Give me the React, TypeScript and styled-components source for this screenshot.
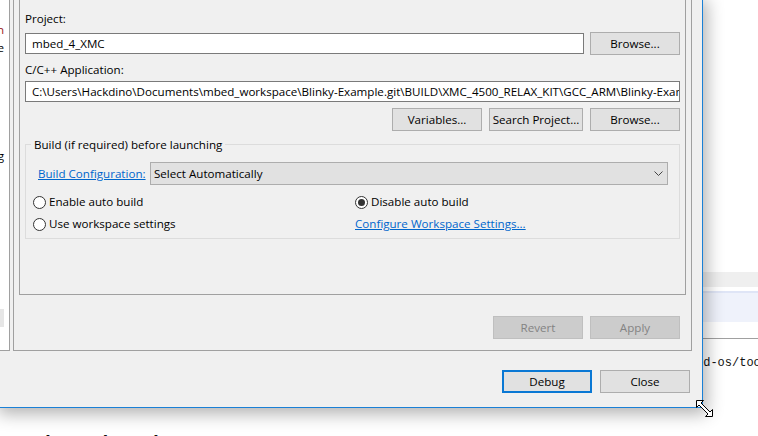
import React from "react";
import styled, { createGlobalStyle } from "styled-components";

const UI_FONT = `"Open Sans", "Noto Sans", "Liberation Sans", sans-serif`;
const MONO_FONT = `"Liberation Mono", "DejaVu Sans Mono", monospace`;

const GlobalStyle = createGlobalStyle`
  html, body { margin: 0; padding: 0; background: #ffffff; }
  body { font-family: ${UI_FONT}; font-size: 11.6px; color: #000; }
  * { box-sizing: border-box; }
`;

const Desktop = styled.div`
  position: relative;
  width: 758px;
  height: 436px;
  overflow: hidden;
  background: #ffffff;
`;

/* ---------- background IDE window ---------- */
const BackWindow = styled.div`
  display: flex;
  flex-direction: column;
  height: 100%;
  padding-top: 272px;
  & > * {
    flex: none;
  }
`;

const BackToolbar = styled.div`
  height: 15px;
  background: #efefef;
`;

const BackTabStrip = styled.div`
  margin-top: 4px;
  height: 31px;
  background: #eff2fb;
  border-top: 2px solid #dfe5f6;
`;

const BackRule = styled.div`
  margin-top: 16px;
  height: 1px;
  background: #a0a0a0;
`;

const ConsoleLine = styled.div<{ $mt: number; $indent: number }>`
  margin-top: ${(p) => p.$mt}px;
  padding-left: ${(p) => p.$indent}px;
  height: 16px;
  line-height: 16px;
  font-family: ${MONO_FONT};
  font-size: 12px;
  white-space: pre;
  color: #111;
`;

/* ---------- dialog window ---------- */
const Dialog = styled.div`
  position: absolute;
  top: 0;
  left: 0;
  width: 703px;
  height: 408px;
  background: #f0f0f0;
  border-right: 1px solid #1a80d6;
  border-bottom: 1px solid #1a80d6;
  box-shadow: 1px 3px 16px 3px rgba(0, 0, 0, 0.3);
  display: flex;
  flex-direction: column;
`;

const DialogBody = styled.div`
  display: flex;
  height: 351px;
  flex: none;
`;

const TreePane = styled.div`
  width: 10px;
  height: 100%;
  background: #ffffff;
  border-right: 1px solid #a0a0a0;
  border-bottom: 1px solid #a0a0a0;
  display: flex;
  flex-direction: column;
  padding-top: 21px;
  overflow: hidden;
`;

const TreeRow = styled.div<{ $color?: string }>`
  flex: none;
  height: 18px;
  line-height: 18px;
  display: flex;
  justify-content: flex-end;
  padding-right: 5px;
  white-space: nowrap;
  color: ${(p) => p.$color ?? "#000"};
`;

const TreeSelection = styled.span`
  background: #e6e6e6;
  padding-right: 7px;
  color: transparent;
`;

const TreeGap = styled.div<{ $rows: number }>`
  flex: none;
  height: ${(p) => p.$rows * 18}px;
`;

const ConfigPanel = styled.div`
  margin-left: 3px;
  width: 679px;
  height: 100%;
  border: 1px solid #a0a0a0;
  border-top: none;
  display: flex;
  flex-direction: column;
`;

const TabBox = styled.div`
  margin-left: 5px;
  width: 667px;
  height: 295px;
  flex: none;
  border: 1px solid #a0a0a0;
  border-top: none;
  padding: 0 5px;
  display: flex;
  flex-direction: column;
  & > * {
    flex: none;
  }
`;

const FieldLabel = styled.div<{ $mt: number }>`
  margin-top: ${(p) => p.$mt}px;
  height: 16px;
  line-height: 16px;
`;

const FieldRow = styled.div<{ $mt: number }>`
  margin-top: ${(p) => p.$mt}px;
  height: 23px;
  display: flex;
  align-items: center;
  gap: 6px;
`;

const TextField = styled.input<{ $mt?: number }>`
  display: block;
  margin: ${(p) => p.$mt ?? 0}px 0 0 0;
  width: 100%;
  height: 21px;
  border: 1px solid #7a7a7a;
  border-radius: 0;
  background: #ffffff;
  padding: 0 0 0 6px;
  font-family: inherit;
  font-size: inherit;
  color: #000;
  outline: none;
`;

const RowField = styled(TextField)`
  flex: 1;
  width: auto;
  min-width: 0;
`;

const ButtonRow = styled.div<{ $mt: number; $pr?: number; $gap: number }>`
  margin-top: ${(p) => p.$mt}px;
  padding-right: ${(p) => p.$pr ?? 0}px;
  display: flex;
  justify-content: flex-end;
  gap: ${(p) => p.$gap}px;
`;

const Button = styled.button<{ $w?: number; $default?: boolean }>`
  width: ${(p) => p.$w ?? 90}px;
  height: 23px;
  padding: 0;
  margin: 0;
  font-family: inherit;
  font-size: inherit;
  color: #000;
  background: #e1e1e1;
  border: ${(p) => (p.$default ? "2px solid #0a78d4" : "1px solid #adadad")};
  border-radius: 0;
  &:disabled {
    background: #cccccc;
    border-color: #bfbfbf;
    color: #838383;
  }
`;

const Group = styled.div`
  position: relative;
  margin-top: 13px;
  height: 95px;
  border: 1px solid #dcdcdc;
  padding: 17px 11px 0 0;
  display: flex;
  flex-direction: column;
`;

const GroupTitle = styled.span`
  position: absolute;
  top: -8px;
  left: 5px;
  padding: 0 3px;
  line-height: 16px;
  background: #f0f0f0;
`;

const ConfigRow = styled.div`
  display: grid;
  grid-template-columns: 112px 1fr;
  align-items: center;
  padding-left: 12px;
  height: 23px;
`;

const Link = styled.a`
  color: #0066cc;
  text-decoration: underline;
  line-height: 16px;
  cursor: pointer;
  white-space: nowrap;
`;

const Combo = styled.div`
  height: 23px;
  display: flex;
  align-items: center;
  justify-content: space-between;
  padding: 0 4px 0 3px;
  background: #e1e1e1;
  border: 1px solid #adadad;
`;

const RadioGrid = styled.div`
  display: grid;
  grid-template-columns: 322px 1fr;
  row-gap: 6px;
  margin-top: 9px;
  padding-left: 7px;
`;

const RadioOption = styled.label`
  display: flex;
  align-items: center;
  gap: 3px;
  height: 16px;
  line-height: 16px;
  white-space: nowrap;
`;

const RadioMark = styled.span<{ $checked?: boolean }>`
  width: 13px;
  height: 13px;
  border-radius: 50%;
  border: 1px solid #333333;
  background: #ffffff;
  display: flex;
  align-items: center;
  justify-content: center;
  flex: none;
  &::after {
    content: "";
    width: 7px;
    height: 7px;
    border-radius: 50%;
    background: ${(p) => (p.$checked ? "#333333" : "transparent")};
  }
`;

const Footer = styled.div`
  display: flex;
  justify-content: flex-end;
  gap: 8px;
  padding: 19px 12px 0 0;
`;

const ResizeCursor = styled.svg`
  position: absolute;
  left: 696px;
  top: 400px;
`;

function Chevron() {
  return (
    <svg width="9" height="5" viewBox="0 0 9 5">
      <polyline points="0.5,0.5 4.5,4.5 8.5,0.5" fill="none" stroke="#444" strokeWidth="1" />
    </svg>
  );
}

export default function App() {
  return (
    <>
      <GlobalStyle />
      <Desktop>
        <BackWindow>
          <BackToolbar />
          <BackTabStrip />
          <BackRule />
          <ConsoleLine $mt={16} $indent={624}>{"Scan: ./mbed-os/tools/toolchains/gcc.py"}</ConsoleLine>
          <ConsoleLine $mt={62} $indent={45}>{"l       l      l"}</ConsoleLine>
        </BackWindow>

        <Dialog>
          <DialogBody>
            <TreePane>
              <TreeRow $color="#9b1c1c">C/C++ Application</TreeRow>
              <TreeRow>mbed_4_XMC Template</TreeRow>
              <TreeGap $rows={5} />
              <TreeRow>GDB Hardware Debugging</TreeRow>
              <TreeGap $rows={8} />
              <TreeRow>
                <TreeSelection>mbed_4_XMC</TreeSelection>
              </TreeRow>
            </TreePane>

            <ConfigPanel>
              <TabBox>
                <FieldLabel $mt={11}>Project:</FieldLabel>
                <FieldRow $mt={5}>
                  <RowField readOnly value="mbed_4_XMC" />
                  <Button>Browse...</Button>
                </FieldRow>
                <FieldLabel $mt={7}>C/C++ Application:</FieldLabel>
                <TextField
                  $mt={3}
                  readOnly
                  value="C:\Users\Hackdino\Documents\mbed_workspace\Blinky-Example.git\BUILD\XMC_4500_RELAX_KIT\GCC_ARM\Blinky-Example.elf"
                />
                <ButtonRow $mt={6} $gap={7}>
                  <Button>Variables...</Button>
                  <Button $w={94}>Search Project...</Button>
                  <Button>Browse...</Button>
                </ButtonRow>

                <Group>
                  <GroupTitle>Build (if required) before launching</GroupTitle>
                  <ConfigRow>
                    <Link>Build Configuration:</Link>
                    <Combo>
                      <span>Select Automatically</span>
                      <Chevron />
                    </Combo>
                  </ConfigRow>
                  <RadioGrid>
                    <RadioOption>
                      <RadioMark />
                      Enable auto build
                    </RadioOption>
                    <RadioOption>
                      <RadioMark $checked />
                      Disable auto build
                    </RadioOption>
                    <RadioOption>
                      <RadioMark />
                      Use workspace settings
                    </RadioOption>
                    <RadioOption>
                      <Link>Configure Workspace Settings...</Link>
                    </RadioOption>
                  </RadioGrid>
                </Group>
              </TabBox>

              <ButtonRow $mt={21} $pr={11} $gap={7}>
                <Button disabled>Revert</Button>
                <Button disabled>Apply</Button>
              </ButtonRow>
            </ConfigPanel>
          </DialogBody>

          <Footer>
            <Button $default>Debug</Button>
            <Button>Close</Button>
          </Footer>
        </Dialog>

        <ResizeCursor width="17" height="17" viewBox="0 0 17 17">
          <polygon
            points="0.5,0.5 7.5,0.5 5,3 14,12 16.5,9.5 16.5,16.5 9.5,16.5 12,14 3,5 0.5,7.5"
            fill="#ffffff"
            stroke="#000000"
            strokeWidth="1"
            strokeLinejoin="miter"
          />
        </ResizeCursor>
      </Desktop>
    </>
  );
}
